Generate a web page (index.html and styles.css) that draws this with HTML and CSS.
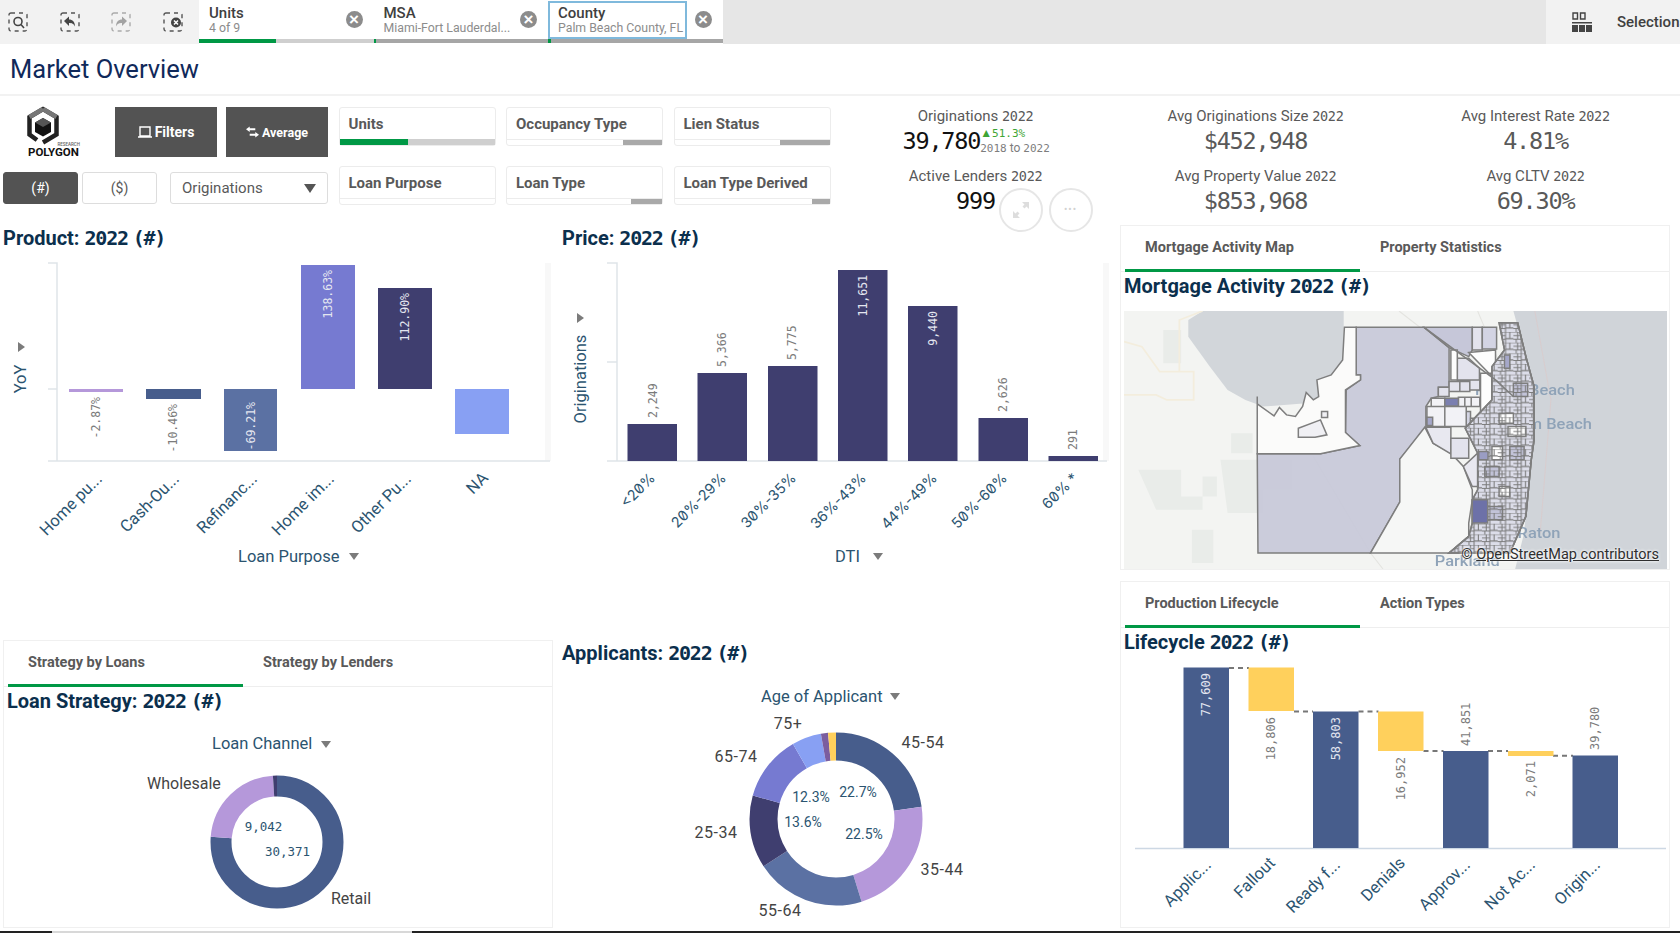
FILE: index.html
```html
<!DOCTYPE html>
<html lang="en">
<head>
  <meta charset="UTF-8" />
  <title>Market Overview</title>
  <link rel="stylesheet" href="styles.css">
</head>
<body>

  <header class="toolbar">
    <div class="tools">
      <svg class="tool" viewBox="0 0 20 20"><rect class="dash" x="1" y="1" width="18" height="18" rx="2"/><circle class="glyph" cx="10" cy="9.500" r="4"/><path class="glyph" d="M13 12.500l3 3.500"/></svg>
      <svg class="tool" viewBox="0 0 20 20"><rect class="dash" x="1" y="1" width="18" height="18" rx="2"/><path class="fill" d="M4 9l5-4.500v3c3.500 0 6 2.500 6 7-1.500-3-3-3.500-6-3.500v3z"/></svg>
      <svg class="tool faded" viewBox="0 0 20 20"><rect class="dash" x="1" y="1" width="18" height="18" rx="2"/><path class="fill" d="M16 9l-5-4.500v3c-3.500 0-6 2.500-6 7 1.500-3 3-3.500 6-3.500v3z"/></svg>
      <svg class="tool" viewBox="0 0 20 20"><rect class="dash" x="1" y="1" width="18" height="18" rx="2"/><circle class="fill" cx="13" cy="10.500" r="5"/><path class="cross" d="M11 8.500l4 4m0-4l-4 4"/></svg>
    </div>

    <div class="sel-tab">
      <div class="sel-text"><b>Units</b><span>4 of 9</span></div>
      <i class="close"></i>
      <div class="sel-bar"><em class="on" style="width:44%"></em><em class="off"></em></div>
    </div>
    <div class="sel-tab">
      <div class="sel-text"><b>MSA</b><span>Miami-Fort Lauderdal...</span></div>
      <i class="close"></i>
      <div class="sel-bar"><em class="on" style="width:2px"></em><em class="all"></em></div>
    </div>
    <div class="sel-tab focus">
      <div class="sel-text"><b>County</b><span>Palm Beach County, FL</span></div>
      <i class="close"></i>
      <div class="sel-bar"><em class="on" style="width:3px"></em><em class="all"></em></div>
    </div>

    <div class="sel-right">
      <svg class="grid-icon" viewBox="0 0 20 20"><path d="M1 1h4.500v6H1zM8.500 1H13v6H8.500z" fill="none" stroke="#444" stroke-width="1.400"/><path d="M0 10h20v1.500H0zM0 13h6v7H0zM7 13h6v7H7zM14 13h6v7h-6z" fill="#444"/></svg>
      <span>Selections</span>
    </div>
  </header>

  <h1 class="page-title">Market Overview</h1>

  <section class="top">
    <div class="actions">
      <div class="action-row">
        <svg class="logo" viewBox="0 0 56 50">
          <path d="M10 33L2.500 27.500V10L16 2l13.500 8v17.500L16 35.500" fill="none" stroke="#222" stroke-width="4.500"/>
          <path d="M16 2L2.500 10M16 2l13.500 8" fill="none" stroke="#777" stroke-width="4.500"/>
          <path d="M16 11l8 4.500V25l-8 4.500L8 25v-9.500z" fill="#111"/>
          <path d="M16 11l8 4.500-8 4.500-8-4.500z" fill="#555"/>
          <text class="logo-small" x="53" y="39" text-anchor="end">RESEARCH</text>
          <text class="logo-big" x="1" y="49">POLYGON</text>
        </svg>
        <button class="dark-btn filters">
          <svg viewBox="0 0 14 12" width="14" height="12"><path d="M2 1h10v9H2zM0 11h14" fill="none" stroke="#fff" stroke-width="1.400"/></svg>
          Filters
        </button>
        <button class="dark-btn average">
          <svg viewBox="0 0 14 12" width="13" height="12"><path d="M4 0L0 3l4 3V4h6V2H4zM10 6l4 3-4 3v-2H4V8h6z" fill="#fff"/></svg>
          Average
        </button>
      </div>
      <div class="action-row second">
        <div class="toggle active">(#)</div>
        <div class="toggle">($)</div>
        <div class="dropdown">Originations<i class="caret"></i></div>
      </div>
    </div>

    <div class="panes">
      <div class="pane"><span>Units</span><div class="pane-bar units"><em></em></div></div>
      <div class="pane"><span>Occupancy Type</span><div class="pane-bar"><em style="width:25%"></em></div></div>
      <div class="pane"><span>Lien Status</span><div class="pane-bar"><em style="width:32%"></em></div></div>
      <div class="pane"><span>Loan Purpose</span><div class="pane-bar"></div></div>
      <div class="pane"><span>Loan Type</span><div class="pane-bar"><em style="width:20%"></em></div></div>
      <div class="pane"><span>Loan Type Derived</span><div class="pane-bar"><em style="width:11%"></em></div></div>
    </div>

    <div class="kpis">
      <div class="kpi">
        <div class="kpi-label">Originations <tt>2022</tt></div>
        <div class="kpi-main">
          <div class="kpi-value black">39,780</div>
          <div class="trend"><span class="up">▲<tt>51.3%</tt></span><span class="span-years"><tt>2018</tt> to <tt>2022</tt></span></div>
        </div>
      </div>
      <div class="kpi">
        <div class="kpi-label">Avg Originations Size <tt>2022</tt></div>
        <div class="kpi-value">$452,948</div>
      </div>
      <div class="kpi">
        <div class="kpi-label">Avg Interest Rate <tt>2022</tt></div>
        <div class="kpi-value">4.81%</div>
      </div>
      <div class="kpi lenders">
        <div class="kpi-label">Active Lenders <tt>2022</tt></div>
        <div class="kpi-value black">999</div>
        <div class="round-btns">
          <div class="round"><svg viewBox="0 0 24 24" width="24" height="24"><path d="M20 4v7l-2.500-2.500-2 2-2-2 2-2L13 4zM4 20v-7l2.500 2.500 2-2 2 2-2 2L11 20z" fill="#ddd"/></svg></div>
          <div class="round dots">•••</div>
        </div>
      </div>
      <div class="kpi">
        <div class="kpi-label">Avg Property Value <tt>2022</tt></div>
        <div class="kpi-value">$853,968</div>
      </div>
      <div class="kpi">
        <div class="kpi-label">Avg CLTV <tt>2022</tt></div>
        <div class="kpi-value">69.30%</div>
      </div>
    </div>
  </section>

  <main class="sheet">
    <section class="col-one">
      <h3 class="chart-title">Product: <tt>2022 (#)</tt></h3>
      <svg class="chart" width="553" height="389" viewBox="0 251 553 389">
        <rect class="edge" x="545" y="263" width="6" height="198"/>
        <path class="axis" d="M48 263h9v198H48M48 389h9M57 461h493"/>
        <rect x="69" y="389" width="54" height="3" fill="#b598da"/>
        <rect x="146" y="389" width="55" height="10" fill="#475d8c"/>
        <rect x="224" y="389" width="53" height="62" fill="#5b71a3"/>
        <rect x="301" y="265" width="54" height="124" fill="#767ad1"/>
        <rect x="378" y="288" width="54" height="101" fill="#3f3e6f"/>
        <rect x="455" y="389" width="54" height="45" fill="#88a0f3"/>
        <text class="dl" transform="rotate(-90 96 397)" x="96" y="397">-2.87%</text>
        <text class="dl" transform="rotate(-90 173 404)" x="173" y="404">-10.46%</text>
        <text class="dl in" transform="rotate(-90 251 402)" x="251" y="402">-69.21%</text>
        <text class="dl in" transform="rotate(-90 327.500 270)" x="327.500" y="270">138.63%</text>
        <text class="dl in" transform="rotate(-90 404.500 293)" x="404.500" y="293">112.90%</text>
        <text class="xl" transform="rotate(-45 103 480)" x="103" y="480">Home pu...</text>
        <text class="xl" transform="rotate(-45 180 480)" x="180" y="480">Cash-Ou...</text>
        <text class="xl" transform="rotate(-45 258 480)" x="258" y="480">Refinanc...</text>
        <text class="xl" transform="rotate(-45 335 480)" x="335" y="480">Home im...</text>
        <text class="xl" transform="rotate(-45 412 480)" x="412" y="480">Other Pu...</text>
        <text class="xl" transform="rotate(-45 489 479)" x="489" y="479">NA</text>
        <text class="at" x="238" y="562">Loan Purpose</text>
        <path class="arrow" d="M349 553h10l-5 7z"/>
        <text class="at" transform="rotate(-90 26 379)" x="26" y="379" text-anchor="middle">YoY</text>
        <path class="arrow" d="M18 342l7 5-7 5z"/>
      </svg>

      <div class="card strategy">
        <div class="tabs">
          <div class="tab active">Strategy by Loans</div>
          <div class="tab">Strategy by Lenders</div>
        </div>
        <h3 class="chart-title">Loan Strategy: <tt>2022 (#)</tt></h3>
        <svg class="chart" width="548" height="214" viewBox="4 714 548 214">
          <text class="at" x="212" y="749">Loan Channel</text>
          <path class="arrow" d="M321 741h10l-5 7z"/>
          <g transform="rotate(-90 277 842)" fill="none" stroke-width="21">
            <circle cx="277" cy="842" r="56" pathLength="100" stroke="#475d8c" stroke-dasharray="76.300 100"/>
            <circle cx="277" cy="842" r="56" pathLength="100" stroke="#b598da" stroke-dasharray="22.700 100" stroke-dashoffset="-76.300"/>
            <circle cx="277" cy="842" r="56" pathLength="100" stroke="#3f3e6f" stroke-dasharray="1 100" stroke-dashoffset="-99"/>
          </g>
          <text class="sl" x="147" y="789">Wholesale</text>
          <text class="sl" x="331" y="904">Retail</text>
          <text class="il" x="263.500" y="831">9,042</text>
          <text class="il" x="287.500" y="856">30,371</text>
        </svg>
      </div>
    </section>

    <section class="col-two">
      <h3 class="chart-title">Price: <tt>2022 (#)</tt></h3>
      <svg class="chart" width="567" height="389" viewBox="553 251 567 389">
        <rect class="edge" x="1103" y="263" width="6" height="198"/>
        <path class="axis" d="M607 263h10v198h-10M607 362h10M617 461h490"/>
        <g fill="#3f3e6f">
          <rect x="627.500" y="424" width="49.500" height="37"/>
          <rect x="697.500" y="373" width="49.500" height="88"/>
          <rect x="768" y="366" width="49.500" height="95"/>
          <rect x="838" y="270" width="49.500" height="191"/>
          <rect x="908" y="306" width="49.500" height="155"/>
          <rect x="978.500" y="418" width="49.500" height="43"/>
          <rect x="1048.500" y="456" width="49.500" height="5"/>
        </g>
        <text class="dl up" transform="rotate(-90 652.500 418)" x="652.500" y="418">2,249</text>
        <text class="dl up" transform="rotate(-90 722 367)" x="722" y="367">5,366</text>
        <text class="dl up" transform="rotate(-90 792 360)" x="792" y="360">5,775</text>
        <text class="dl in" transform="rotate(-90 862.500 275)" x="862.500" y="275">11,651</text>
        <text class="dl in" transform="rotate(-90 933 311)" x="933" y="311">9,440</text>
        <text class="dl up" transform="rotate(-90 1003 412)" x="1003" y="412">2,626</text>
        <text class="dl up" transform="rotate(-90 1073 450)" x="1073" y="450">291</text>
        <text class="xl zero" transform="rotate(-45 656 479)" x="656" y="479">&lt;20%</text>
        <text class="xl zero" transform="rotate(-45 727 479)" x="727" y="479">20%-29%</text>
        <text class="xl zero" transform="rotate(-45 797 479)" x="797" y="479">30%-35%</text>
        <text class="xl zero" transform="rotate(-45 867 479)" x="867" y="479">36%-43%</text>
        <text class="xl zero" transform="rotate(-45 938 479)" x="938" y="479">44%-49%</text>
        <text class="xl zero" transform="rotate(-45 1008 479)" x="1008" y="479">50%-60%</text>
        <text class="xl zero" transform="rotate(-45 1079 479)" x="1079" y="479">60% *</text>
        <text class="at" x="835" y="562">DTI</text>
        <path class="arrow" d="M873 553h10l-5 7z"/>
        <text class="at" transform="rotate(-90 586 379)" x="586" y="379" text-anchor="middle">Originations</text>
        <path class="arrow" d="M577 313l7 5-7 5z"/>
      </svg>

      <h3 class="chart-title">Applicants: <tt>2022 (#)</tt></h3>
      <svg class="chart" width="567" height="264" viewBox="553 666 567 264">
        <text class="at" x="761" y="702">Age of Applicant</text>
        <path class="arrow" d="M890 693h10l-5 7z"/>
        <g transform="rotate(-90 836 819)" fill="none" stroke-width="28">
          <circle cx="836" cy="819" r="72.500" pathLength="100" stroke="#475d8c" stroke-dasharray="22.700 100"/>
          <circle cx="836" cy="819" r="72.500" pathLength="100" stroke="#b598da" stroke-dasharray="22.500 100" stroke-dashoffset="-22.700"/>
          <circle cx="836" cy="819" r="72.500" pathLength="100" stroke="#5b71a3" stroke-dasharray="20.600 100" stroke-dashoffset="-45.200"/>
          <circle cx="836" cy="819" r="72.500" pathLength="100" stroke="#3f3e6f" stroke-dasharray="13.600 100" stroke-dashoffset="-65.800"/>
          <circle cx="836" cy="819" r="72.500" pathLength="100" stroke="#767ad1" stroke-dasharray="12.300 100" stroke-dashoffset="-79.400"/>
          <circle cx="836" cy="819" r="72.500" pathLength="100" stroke="#88a0f3" stroke-dasharray="5.500 100" stroke-dashoffset="-91.700"/>
          <circle cx="836" cy="819" r="72.500" pathLength="100" stroke="#7b5e9f" stroke-dasharray="1.300 100" stroke-dashoffset="-97.200"/>
          <circle cx="836" cy="819" r="72.500" pathLength="100" stroke="#ffd05c" stroke-dasharray="1.500 100" stroke-dashoffset="-98.500"/>
        </g>
        <text class="sl mid" x="788" y="729">75+</text>
        <text class="sl mid" x="736" y="762">65-74</text>
        <text class="sl mid" x="923" y="748">45-54</text>
        <text class="sl mid" x="716" y="838">25-34</text>
        <text class="sl mid" x="942" y="875">35-44</text>
        <text class="sl mid" x="780" y="916">55-64</text>
        <text class="pl" x="858" y="797">22.7%</text>
        <text class="pl" x="811" y="802">12.3%</text>
        <text class="pl" x="803" y="827">13.6%</text>
        <text class="pl" x="864" y="839">22.5%</text>
      </svg>
    </section>

    <section class="col-three">
      <div class="card map-card">
        <div class="tabs">
          <div class="tab active">Mortgage Activity Map</div>
          <div class="tab">Property Statistics</div>
        </div>
        <h3 class="chart-title">Mortgage Activity <tt>2022 (#)</tt></h3>
        <div class="map">
          <svg width="543" height="258" viewBox="10 33 1520 775" preserveAspectRatio="none">
            <defs>
              <pattern id="blocks" width="44" height="32" patternUnits="userSpaceOnUse">
                <path d="M0 0h44M0 11h22M22 20h22M0 22h22M12 0v22M22 0v32M34 0v20M8 22v10" fill="none" stroke="#7a7a7a" stroke-width="3"/>
              </pattern>
            </defs>
            <rect x="0" y="0" width="1600" height="900" fill="#f3f4f2"/>
            <path class="land" d="M280 480h200v90h-80v70h-100zM50 510h120v80h100v-60h-40v100h-130zM310 400h60v60h-60zM200 690h60v100h-60zM120 90h50v100h-50z"/>
            <path d="M190 60L230 33H625V300L520 310 400 320 350 300 300 270 250 200 190 110z" fill="#d2d6da"/>
            <path d="M1100 33H1530V808H1105L1130 700 1150 470 1160 300 1130 150z" fill="#d0d4d9"/>
            <path d="M10 125L60 140 110 215H205V300H130L100 285H10M165 215V60L230 33" class="road"/>
            <path d="M1000 33L1100 290M780 33L1100 300M540 470L700 760 735 808" class="road thin"/>
            <path d="M1160 33L1205 300 1175 700" class="road pink"/>
            <text class="city" x="1272" y="285" text-anchor="end">Riviera Beach</text>
            <text class="city" x="1320" y="387" text-anchor="end">Palm Beach</text>
            <text class="city" x="1232" y="715" text-anchor="end">Boca Raton</text>
            <text class="city" x="880" y="798">Parkland</text>
            <g class="tracts">
              <path fill="#c8c9d9" fill-opacity=".95" d="M660 82H850L920 143V262H890V290L870 295 855 320V382L782 478V607L700 760H385L383 462H560L670 437 630 398 632 270 672 240V225H660z"/>
              <path fill="#fbfbfa" d="M383 290V462H560L670 437 630 398V270L672 240V225H660V82H627L622 180 590 225 550 240 555 290 540 300 520 278 510 320 490 350 465 345 445 323 430 348 383 312z"/>
              <path fill="#f6f7f6" d="M852 382L875 430 925 460 960 500 985 570V600L975 670V710L920 760H700L782 607V478z"/>
              <path fill="#c6c7d9" d="M850 82H985V150L975 170 920 143z"/>
              <path fill="#e8e8f0" d="M855 382L925 382 925 462 875 430zM1003 360h30v200h-48l-25-60 40-40z"/>
              <path fill="#f0f0f4" d="M498 385L560 360 578 405 545 412H498zM563 335h17v18h-17z"/>
              <path fill="#e3e3ed" d="M985 82h28v68h-28zM890 262h30v28h-30zM920 245h30v30h-30zM950 245h28v30h-28zM978 240h28v30h-28zM943 175h32l30 30v35h-62zM925 415h50v60h-50z"/>
              <path fill="#d3d4e3" d="M1013 82h40v65h-40zM968 335h12v45h-12z"/>
              <path fill="#f2f2f6" d="M870 295h38v25h-38zM858 320h50v60h-50zM908 320h60v60h-60zM946 292h18v28h-18zM964 292h18v28h-18zM982 292h24v28h-24zM980 355h50v25h-50z"/>
              <path fill="#fdfdfd" d="M925 150h18v90h-18zM975 158L1050 150V240zM1008 220h32v116h-32z"/>
              <path fill="#dcdde9" d="M1060 68H1112L1135 170 1158 260V420L1150 480 1135 650 1115 700 1090 760H920L975 710 985 670V600L1000 570V460L965 385 1000 345 1040 300V200L1075 150z"/>
              <path fill="#fff" stroke="none" d="M1060 340h40v30h-40zM1085 380h50v30h-50zM1040 440h30v40h-30zM1060 560h30v30h-30z"/>
              <path fill="#c2c3d8" stroke="none" d="M1100 250h40v40h-40zM1020 500h40v30h-40zM1090 440h40v40h-40zM1020 620h50v40h-50z"/>
              <path fill="url(#blocks)" stroke="none" d="M1060 68H1112L1135 170 1158 260V420L1150 480 1135 650 1115 700 1090 760H920L975 710 985 670V600L1000 570V460L965 385 1000 345 1040 300V200L1075 150z"/>
              <path d="M1060 68H1112L1135 170 1158 260V420L1150 480 1135 650 1115 700 1090 760H920L975 710" fill="none"/>
              <path d="M850 82L1050 240 1100 290" fill="none"/>
              <path fill="#6d71a8" d="M985 600h43v70h-43z"/>
              <path fill="#7b7fb0" d="M908 295h38v23h-38z"/>
              <path fill="#9a9dc3" d="M1003 455h26v25h-26z"/>
              <path fill="#a5a7c9" d="M858 352h16v25h-16zM1075 165h15v40h-15z"/>
            </g>
          </svg>
          <div class="map-credit">© <u>OpenStreetMap contributors</u></div>
        </div>
      </div>

      <div class="card lifecycle">
        <div class="tabs">
          <div class="tab active">Production Lifecycle</div>
          <div class="tab">Action Types</div>
        </div>
        <h3 class="chart-title">Lifecycle <tt>2022 (#)</tt></h3>
        <svg class="chart" width="548" height="272" viewBox="1121 655 548 272">
          <path class="axis blue" d="M1135 848.500h531"/>
          <path class="link" d="M1229 668h20M1294 711.500h19M1358.500 711.500h20M1423.500 751h20M1488 751h20M1553 755.700h20"/>
          <g fill="#475d8c">
            <rect x="1183.500" y="667.500" width="45.500" height="180.500"/>
            <rect x="1313" y="711.500" width="45.500" height="136.500"/>
            <rect x="1443" y="751" width="45.500" height="97"/>
            <rect x="1572.500" y="755.500" width="45.500" height="92.500"/>
          </g>
          <g fill="#ffd05c">
            <rect x="1248.500" y="667.500" width="45.500" height="43.500"/>
            <rect x="1378" y="711.500" width="45.500" height="39.500"/>
            <rect x="1508" y="751" width="45.500" height="5"/>
          </g>
          <text class="dl in big" transform="rotate(-90 1206 673)" x="1206" y="673">77,609</text>
          <text class="dl big" transform="rotate(-90 1271 717)" x="1271" y="717">18,806</text>
          <text class="dl in big" transform="rotate(-90 1336 717)" x="1336" y="717">58,803</text>
          <text class="dl big" transform="rotate(-90 1401 757)" x="1401" y="757">16,952</text>
          <text class="dl up big" transform="rotate(-90 1466 746)" x="1466" y="746">41,851</text>
          <text class="dl big" transform="rotate(-90 1531 761)" x="1531" y="761">2,071</text>
          <text class="dl up big" transform="rotate(-90 1595 750)" x="1595" y="750">39,780</text>
          <text class="xl" transform="rotate(-45 1212 866)" x="1212" y="866">Applic...</text>
          <text class="xl" transform="rotate(-45 1276 864)" x="1276" y="864">Fallout</text>
          <text class="xl" transform="rotate(-45 1341 866)" x="1341" y="866">Ready f...</text>
          <text class="xl" transform="rotate(-45 1406 864)" x="1406" y="864">Denials</text>
          <text class="xl" transform="rotate(-45 1471 866)" x="1471" y="866">Approv...</text>
          <text class="xl" transform="rotate(-45 1536 866)" x="1536" y="866">Not Ac...</text>
          <text class="xl" transform="rotate(-45 1601 866)" x="1601" y="866">Origin...</text>
        </svg>
      </div>
    </section>
  </main>

  <footer class="strip"></footer>

</body>
</html>
```

FILE: styles.css
```css
html, body {
  margin: 0;
  height: 933px;
  overflow: hidden;
  background: #fff;
  font-family: Roboto, "Noto Sans", sans-serif;
  color: #595959;
}

tt {
  font-family: "DejaVu Sans Mono", monospace;
}

/* selection bar */
.toolbar {
  height: 44px;
  background: #e6e6e6;
  display: flex;
  position: relative;
  overflow: hidden;
}

.tools {
  display: flex;
  gap: 31.6px;
  align-items: center;
  padding: 0 0 1px 8px;
  width: 199px;
  flex: none;
  box-sizing: border-box;
  background: #f2f2f2;
}

.tool {
  width: 20px;
  height: 20px;
  flex: none;
}

.tool.faded {
  opacity: 0.45;
}

.tool .dash {
  fill: none;
  stroke: #555;
  stroke-width: 1.4;
  stroke-dasharray: 4 4;
}

.tool .glyph {
  fill: none;
  stroke: #444;
  stroke-width: 1.6;
}

.tool .fill {
  fill: #444;
}

.tool .cross {
  stroke: #fff;
  stroke-width: 1.5;
}

.sel-tab {
  width: 174.500px;
  height: 44px;
  background: #fff;
  position: relative;
  box-sizing: border-box;
  padding: 6px 10px 0;
  flex: none;
}

.sel-text {
  display: flex;
  flex-direction: column;
  line-height: 15px;
  white-space: nowrap;
}

.sel-text b {
  font-size: 15px;
  font-weight: 500;
  color: #404040;
}

.sel-text span {
  font-size: 12.300px;
  color: #8c8c8c;
}

.sel-tab.focus::before {
  content: "";
  position: absolute;
  left: 0;
  top: 1px;
  width: 139px;
  height: 38px;
  border: 2px solid #7fb9dc;
  box-sizing: border-box;
}

.close {
  position: absolute;
  right: 11px;
  top: 11px;
  width: 17px;
  height: 17px;
  border-radius: 50%;
  background: #8c8c8c;
}

.close::before {
  content: "×";
  display: block;
  color: #fff;
  font: bold 17px/17px "Liberation Sans", sans-serif;
  text-align: center;
}

.sel-bar {
  position: absolute;
  left: 0;
  right: 0;
  bottom: 1px;
  height: 4px;
  display: flex;
}

.sel-bar em {
  display: block;
}

.sel-bar .on {
  background: #009845;
}

.sel-bar .off {
  flex: 1;
  background: #cfcfcf;
}

.sel-bar .all {
  flex: 1;
  background: #a6a6a6;
}

.sel-right {
  margin-left: auto;
  width: 134px;
  flex: none;
  background: #f2f2f2;
  display: flex;
  align-items: center;
  gap: 25px;
  padding-left: 26px;
  box-sizing: border-box;
  white-space: nowrap;
  font-size: 15px;
  font-weight: 500;
  color: #404040;
}

.grid-icon {
  width: 20px;
  height: 20px;
  flex: none;
}

/* title */
.page-title {
  margin: 0;
  height: 52px;
  line-height: 51px;
  padding-left: 10px;
  font-size: 25.500px;
  font-weight: 400;
  color: #10295a;
  border-bottom: 2px solid #f2f2f2;
  box-sizing: border-box;
}

/* filters and kpis */
.top {
  height: 129px;
  display: flex;
  padding-top: 11px;
  box-sizing: border-box;
}

.actions {
  width: 338px;
  flex: none;
  display: flex;
  flex-direction: column;
  gap: 15px;
}

.action-row {
  display: flex;
  height: 50px;
  padding-left: 27px;
}

.action-row.second {
  height: 32px;
  padding-left: 3px;
  gap: 4px;
}

.logo {
  width: 56px;
  height: 50px;
  flex: none;
  margin-right: 32px;
  overflow: visible;
}

.logo-small {
  font: 500 4.500px Roboto, sans-serif;
  fill: #666;
}

.logo-big {
  font: 700 11.500px Roboto, sans-serif;
  fill: #111;
}

.dark-btn {
  width: 102px;
  height: 50px;
  background: #535353;
  border: 0;
  color: #fff;
  font: 700 14px Roboto, sans-serif;
  display: flex;
  align-items: center;
  justify-content: center;
  gap: 3px;
  padding: 0;
}

.dark-btn.average {
  font-size: 12.5px;
  margin-left: 9px;
}

.toggle {
  width: 75px;
  height: 32px;
  line-height: 30px;
  box-sizing: border-box;
  border: 1px solid #ddd;
  border-radius: 3px;
  text-align: center;
  font-size: 14px;
}

.toggle.active {
  background: #535353;
  border-color: #535353;
  color: #fff;
}

.dropdown {
  width: 158px;
  height: 32px;
  margin-left: 9px;
  box-sizing: border-box;
  border: 1px solid #ddd;
  border-radius: 3px;
  line-height: 30px;
  padding: 0 11px;
  font-size: 15px;
  display: flex;
  justify-content: space-between;
  align-items: center;
}

.caret {
  width: 0;
  height: 0;
  border-left: 6px solid transparent;
  border-right: 6px solid transparent;
  border-top: 9px solid #555;
}

.panes {
  width: 492px;
  flex: none;
  margin-left: 0.500px;
  display: grid;
  grid-template-columns: repeat(3, 157px);
  grid-auto-rows: 39px;
  gap: 20px 10.500px;
}

.pane {
  border: 1px solid #ececec;
  border-radius: 3px;
  display: flex;
  flex-direction: column;
  justify-content: space-between;
  font-size: 15px;
  font-weight: 700;
  color: #595959;
  white-space: nowrap;
}

.pane span {
  padding: 7px 0 0 9px;
}

.pane-bar {
  height: 5px;
  border-top: 1px solid #ececec;
  display: flex;
  justify-content: flex-end;
}

.pane-bar em {
  display: block;
  background: #a9a9a9;
}

.pane-bar.units {
  background: #cfcfcf;
  justify-content: flex-start;
  border-top: 0;
  height: 6px;
}

.pane-bar.units em {
  width: 44%;
  background: #009845;
}

.kpis {
  width: 840px;
  flex: none;
  margin-left: 5px;
  display: grid;
  grid-template-columns: repeat(3, 280px);
  grid-auto-rows: 59.500px;
}

.kpi {
  text-align: center;
  position: relative;
}

.kpi-label {
  font-size: 15px;
  line-height: 18px;
  color: #595959;
  white-space: nowrap;
}

.kpi-label tt {
  font-size: 13.500px;
  letter-spacing: -0.3px;
}

.kpi-value {
  font-family: "DejaVu Sans Mono", monospace;
  font-size: 23.500px;
  letter-spacing: -1.200px;
  font-weight: 400;
  line-height: 33px;
  color: #595959;
}

.kpi-value.black {
  color: #111;
}

.kpi-main {
  display: flex;
  justify-content: flex-start;
  padding-left: 67px;
}

.trend {
  display: flex;
  flex-direction: column;
  align-items: flex-start;
  font-size: 12px;
  line-height: 15px;
  white-space: nowrap;
  color: #7d7d7d;
  padding-top: 1px;
}

.trend tt {
  font-size: 11px;
}

.trend .up {
  color: #3fa535;
}

.round-btns {
  position: absolute;
  left: 163px;
  top: 21px;
  display: flex;
  gap: 6px;
}

.round {
  width: 44px;
  height: 44px;
  border: 2px solid #e6e6e6;
  border-radius: 50%;
  box-sizing: border-box;
  display: flex;
  align-items: center;
  justify-content: center;
  background: #fff;
}

.dots {
  color: #d2d2d2;
  font-size: 10px;
  letter-spacing: 1px;
}

/* sheet */
.sheet {
  display: grid;
  grid-template-columns: 553px 567px 550px;
  height: 706px;
}

.chart-title {
  margin: 0;
  height: 26px;
  line-height: 26px;
  font-size: 20px;
  font-weight: 700;
  color: #0b2f4d;
  white-space: nowrap;
}

.chart-title tt {
  font-size: 20px;
  letter-spacing: -1.200px;
  word-spacing: -6px;
}

.chart {
  display: block;
}

.col-one > .chart-title {
  padding-left: 3px;
}

.col-two > .chart-title {
  padding-left: 9px;
}

.card {
  border: 1px solid #f0f0f0;
  box-sizing: border-box;
}

.card .chart-title {
  padding-left: 3px;
  margin-top: 1px;
}

.strategy {
  margin-left: 3px;
  width: 550px;
  height: 288px;
}

.tabs {
  height: 45px;
  display: flex;
  border-bottom: 1px solid #eee;
  padding-left: 4px;
}

.tab {
  width: 235px;
  box-sizing: border-box;
  padding-left: 20px;
  line-height: 44px;
  font-size: 14.500px;
  font-weight: 700;
  color: #595959;
  white-space: nowrap;
}

.tab.active {
  border-bottom: 3px solid #009845;
  height: 46px;
}

.col-three {
  display: flex;
  flex-direction: column;
  gap: 11px;
}

.map-card {
  height: 345px;
}

.map {
  margin: 12px 0 0 3px;
  width: 543px;
  height: 258px;
  position: relative;
  overflow: hidden;
}

.map svg {
  display: block;
  filter: blur(0.4px);
}

.map-credit {
  position: absolute;
  right: 8px;
  bottom: 6px;
  font-size: 14.500px;
  line-height: 16px;
  color: #2f2f2f;
  white-space: nowrap;
  text-shadow: 0 0 3px #fff, 0 0 3px #fff;
}

.lifecycle {
  height: 347px;
}

.strip {
  height: 2px;
  background: linear-gradient(90deg, #222 0, #222 52px, #d8d8d8 52px, #d8d8d8 412px, #222 412px);
}

/* svg chart text */
.axis {
  fill: none;
  stroke: #dfe5e9;
  stroke-width: 1.500;
}

.axis.blue {
  stroke: #cdd8e4;
}

.edge {
  fill: #f8f8f8;
}

.arrow {
  fill: #7b7b7b;
}

.link {
  fill: none;
  stroke: #777;
  stroke-width: 2;
  stroke-dasharray: 5 4;
}

.dl {
  font-family: "DejaVu Sans Mono", monospace;
  font-size: 11.500px;
  fill: #7b7b7b;
  text-anchor: end;
  dominant-baseline: central;
}

.dl.up {
  text-anchor: start;
}

.dl.in {
  fill: #e4e6f0;
}

.dl.big {
  font-size: 12px;
}

.xl {
  font-family: Roboto, sans-serif;
  font-size: 16.500px;
  fill: #2b5470;
  text-anchor: end;
}

.xl.zero {
  font-family: Inter, Roboto, sans-serif;
  font-size: 14.500px;
  font-feature-settings: "zero";
}

.at {
  font-family: Roboto, sans-serif;
  font-size: 16.500px;
  fill: #2b5470;
}

.sl {
  font-family: Roboto, sans-serif;
  font-size: 16px;
  fill: #444;
}

.sl.mid {
  text-anchor: middle;
  letter-spacing: 0.5px;
}

.il {
  font-family: "DejaVu Sans Mono", monospace;
  font-size: 12.500px;
  fill: #2b5470;
  text-anchor: middle;
}

.pl {
  font-family: Roboto, sans-serif;
  font-size: 14px;
  fill: #2b5470;
  text-anchor: middle;
}

/* map */
.land {
  fill: #e9ece9;
}

.road {
  fill: none;
  stroke: #f3eddd;
  stroke-width: 5;
}

.road.thin {
  stroke: #e4e4e0;
  stroke-width: 3;
}

.road.pink {
  stroke: #dcc9c9;
  stroke-width: 2;
}

.city {
  font-family: Roboto, sans-serif;
  font-size: 46px;
  font-weight: 500;
  fill: #8fa3b8;
}

.tracts path {
  stroke: #7e7e7e;
  stroke-width: 1.500;
  vector-effect: non-scaling-stroke;
}
```
